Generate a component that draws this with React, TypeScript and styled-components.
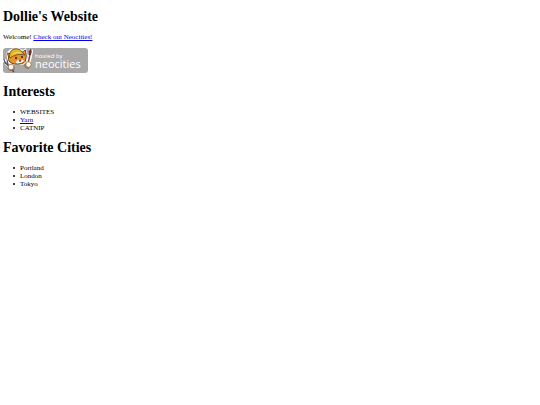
import React from "react";
import styled, { createGlobalStyle } from "styled-components";

const GlobalStyle = createGlobalStyle`
  body {
    margin: 0;
    background: #fff;
    color: #000;
    font-family: "Liberation Serif", "Times New Roman", serif;
    font-size: 7px;
    line-height: 8px;
  }
`;

const Page = styled.main`
  padding: 9px 3px;
`;

const Heading = styled.h1`
  margin: 0 0 8px;
  font-size: 14px;
  line-height: 16px;
  font-weight: 700;
`;

const Paragraph = styled.p`
  margin: 0 0 7px;
`;

const Link = styled.a`
  color: #0000ee;
  text-decoration: underline;
`;

const BadgeLink = styled.a`
  display: block;
  width: fit-content;
  margin-bottom: 11px;
`;

const BadgeArt = styled.svg`
  display: block;
`;

const BadgeText = styled.text<{ $large?: boolean }>`
  fill: #fff;
  font-family: "Open Sans", "Noto Sans", sans-serif;
  font-size: ${(p) => (p.$large ? 11 : 6)}px;
  font-weight: 400;
`;

const List = styled.ul`
  margin: 0 0 8px;
  padding-left: 10px;
  list-style: none;
`;

const Item = styled.li`
  display: flex;
  align-items: center;
  gap: 5px;

  &::before {
    content: "";
    width: 2px;
    height: 2px;
    border-radius: 50%;
    background: #000;
  }
`;

const Badge = () => (
  <BadgeArt width="85" height="25" viewBox="0 0 85 25" role="img" aria-label="hosted by neocities">
    <rect width="85" height="25" rx="3" fill="#a8a8a8" />
    <path d="M2 13 L9 21 M25 17 L28 3" stroke="#fff" strokeWidth="4" strokeLinecap="round" />
    <path d="M3.5 5 Q7 0 12 .5 L16 0 L20 2 L23 0 L24.5 7 Q25 15 19 17 L9 17 L4.5 14 Z" fill="#fff" />
    <path d="M5.5 9 Q4 14 11 16 Q20 17 22.5 13 Q24 9 22.5 2 L18 5 L8 6 L4.5 5 Z" fill="#ed932e" stroke="#4f3521" strokeWidth=".9" />
    <path d="M13 14 Q15 11 17 12 Q20 11 21 13 Q18 16 13 15 Z" fill="#fff4df" />
    <path d="M6.5 9 Q6 3 11 1 Q17 0 19 4 L22 7 Q14 5 7 10 Z" fill="#e5b22c" stroke="#705618" strokeWidth=".9" />
    <path d="M10 6 Q14 3 18 5" fill="none" stroke="#f7dc68" strokeWidth="1" />
    <ellipse cx="13" cy="10" rx=".9" ry="1.2" fill="#30251c" />
    <ellipse cx="19" cy="9" rx=".9" ry="1.2" fill="#30251c" />
    <path d="M16 12 h2 L17 14 Z" fill="#a5333b" stroke="#60402c" strokeWidth=".6" />
    <path d="M2 14 L11 24" stroke="#464c50" strokeWidth="1.5" />
    <path d="M1 11 l1 4 l3 1 l-1 -4" fill="none" stroke="#586168" strokeWidth="1.2" />
    <path d="M25 16 L27 6" stroke="#96502c" strokeWidth="1.5" />
    <path d="M26 7 Q25 3 28 1 Q29 4 27.5 7 Z" fill="#8d2528" stroke="#503029" strokeWidth=".6" />
    <path d="M5 19 Q5 24 11 22 L11 19 Z M22 16 Q21 21 26 20 L27 17 Z" fill="#e9963a" stroke="#65401f" strokeWidth=".6" />
    <circle cx="8" cy="19" r="2.8" fill="#fffaf0" stroke="#8c6135" strokeWidth=".7" />
    <ellipse cx="25.5" cy="16.5" rx="2.6" ry="2.8" fill="#fffaf0" stroke="#8c6135" strokeWidth=".7" />
    <BadgeText x="32" y="10">hosted by</BadgeText>
    <BadgeText $large x="32" y="20">neocities</BadgeText>
  </BadgeArt>
);

export default function App() {
  return (
    <>
      <GlobalStyle />
      <Page>
        <Heading>Dollie's Website</Heading>
        <Paragraph>
          Welcome! <Link href="#neocities">Check out Neocities!</Link>
        </Paragraph>
        <BadgeLink href="#neocities">
          <Badge />
        </BadgeLink>
        <Heading>Interests</Heading>
        <List>
          <Item>WEBSITES</Item>
          <Item>
            <Link href="#yarn">Yarn</Link>
          </Item>
          <Item>CATNIP</Item>
        </List>
        <Heading>Favorite Cities</Heading>
        <List>
          <Item>Portland</Item>
          <Item>London</Item>
          <Item>Tokyo</Item>
        </List>
      </Page>
    </>
  );
}
